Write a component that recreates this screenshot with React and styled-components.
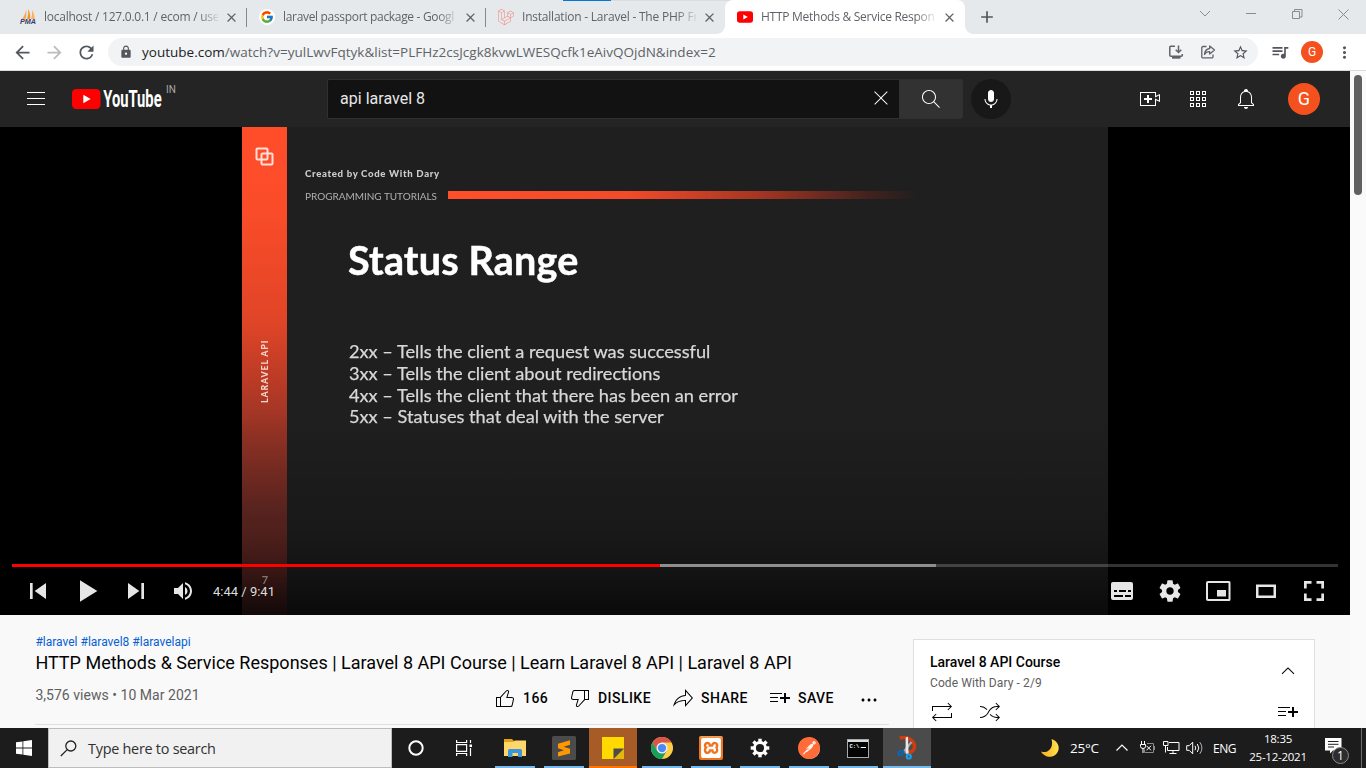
import React from "react";
import styled, { createGlobalStyle, css } from "styled-components";
import { MdArrowBack, MdArrowForward, MdRefresh, MdLock, MdQueueMusic, MdMoreVert, MdStarBorder, MdClose, MdAdd } from "react-icons/md";
import { FcGoogle } from "react-icons/fc";
import { SiLaravel, SiXampp, SiPostman } from "react-icons/si";

const GlobalStyle = createGlobalStyle`
  * { box-sizing: border-box; }
  body { margin: 0; overflow: hidden; background: #f9f9f9; font-family: Roboto, "Liberation Sans", sans-serif; }
  svg { display: block; flex: none; }
`;

const segoe = `"Open Sans", "Noto Sans", sans-serif`;

const Screen = styled.div`
  width: 1366px;
  height: 768px;
  display: flex;
  flex-direction: column;
  overflow: hidden;
`;

/* ---------- browser chrome ---------- */

const TabStrip = styled.div`
  position: relative;
  height: 34px;
  flex: none;
  display: flex;
  background: #e6e9ec;
  padding-left: 8px;
`;

const LoadingMark = styled.div`
  position: absolute;
  top: 0;
  left: 563px;
  width: 241px;
  height: 1px;
  background: linear-gradient(90deg, #0078d7 48px, #dcdcdc 48px);
`;

const Tab = styled.div`
  position: relative;
  width: 239px;
  height: 34px;
  display: flex;
  align-items: center;
  padding: 0 8px 0 12px;
  ${(p) => p.$separator && css`
    &::after {
      content: "";
      position: absolute;
      right: 0;
      top: 8px;
      width: 1px;
      height: 19px;
      background: #85888c;
    }
  `}
  ${(p) => p.$active && css`
    width: 240px;
    background: #fff;
    border-radius: 8px 8px 0 0;
    &::before, &::after {
      content: "";
      position: absolute;
      bottom: 0;
      width: 8px;
      height: 8px;
    }
    &::before { left: -8px; background: radial-gradient(circle at 0 0, transparent 7.5px, #fff 8px); }
    &::after { right: -8px; background: radial-gradient(circle at 100% 0, transparent 7.5px, #fff 8px); }
  `}
`;

const Favicon = styled.div`
  width: 16px;
  height: 34px;
  display: flex;
  align-items: center;
  justify-content: center;
  margin-right: 8px;
`;

const GoogleDisc = styled.div`
  width: 16px;
  height: 16px;
  flex: none;
  border-radius: 50%;
  background: #fff;
  display: flex;
  align-items: center;
  justify-content: center;
`;

const TabTitle = styled.div`
  width: 175px;
  overflow: hidden;
  white-space: nowrap;
  font: 12px/18px ${segoe};
  letter-spacing: ${(p) => p.$spacing}px;
  color: #5f6368;
  mask-image: linear-gradient(90deg, #000 154px, transparent 177px);
`;

const TabClose = styled.div`
  margin-left: 5px;
  width: 16px;
  display: flex;
  justify-content: center;
  color: #5f6368;
`;

const NewTab = styled.div`
  width: 44px;
  display: flex;
  align-items: center;
  justify-content: center;
  color: #53575c;
`;

const WindowButtons = styled.div`
  margin-left: auto;
  display: flex;
  height: 28px;
  align-items: center;
  color: #888b8f;
  & > div { width: 46px; display: flex; justify-content: center; }
`;

const Toolbar = styled.div`
  height: 37px;
  flex: none;
  display: flex;
  align-items: center;
  background: #fff;
  border-bottom: 1px solid #d9dde0;
  padding: 0 6px;
  color: #53575c;
`;

const ToolButton = styled.div`
  width: 32px;
  height: 32px;
  display: flex;
  align-items: center;
  justify-content: center;
  color: ${(p) => (p.$dim ? "#babcbe" : "#53575c")};
`;

const AddressBar = styled.div`
  width: 1150px;
  height: 28px;
  margin: 0 6px;
  border-radius: 14px;
  background: #f1f3f4;
  display: flex;
  align-items: center;
  padding: 0 2px 0 11px;
`;

const Url = styled.div`
  flex: 1;
  margin-left: 9px;
  font: 13.5px/20px ${segoe};
  letter-spacing: 0.01px;
  white-space: nowrap;
  color: #5f6368;
  b { font-weight: 400; color: #202124; }
`;

const Avatar = styled.div`
  width: ${(p) => p.$size}px;
  height: ${(p) => p.$size}px;
  border-radius: 50%;
  background: #f4511e;
  color: #fff;
  display: flex;
  align-items: center;
  justify-content: center;
  font-size: ${(p) => p.$font}px;
  line-height: 1;
`;

/* ---------- page ---------- */

const Viewport = styled.div`
  height: 657px;
  flex: none;
  display: flex;
`;

const Page = styled.div`
  width: 1350px;
  display: flex;
  flex-direction: column;
  overflow: hidden;
`;

const Scrollbar = styled.div`
  width: 16px;
  background: #fafafa;
  padding: 4px;
  &::before {
    content: "";
    display: block;
    height: 120px;
    border-radius: 4px;
    background: #606060;
  }
`;

const Masthead = styled.div`
  height: 56px;
  flex: none;
  background: #242424;
  display: flex;
  align-items: center;
  padding: 0 30px 0 24px;
`;

const Brand = styled.div`
  display: flex;
  margin-left: 24px;
  width: 255px;
`;

const Country = styled.span`
  margin: -5px 0 0 4px;
  font-size: 10px;
  color: #aaa;
  line-height: 12px;
`;

const SearchField = styled.div`
  width: 572px;
  height: 40px;
  border: 1px solid #303030;
  border-right: 0;
  border-radius: 2px 0 0 2px;
  background: #121212;
  display: flex;
  align-items: center;
  justify-content: space-between;
  padding: 0 7px 2px 12px;
  color: #e8e8e8;
  font-size: 16px;
  letter-spacing: 0.02px;
`;

const SearchButton = styled.div`
  width: 64px;
  height: 40px;
  background: #323232;
  border: 1px solid #303030;
  border-radius: 0 2px 2px 0;
  display: flex;
  align-items: center;
  justify-content: center;
`;

const MicButton = styled.div`
  width: 40px;
  height: 40px;
  border-radius: 50%;
  background: #181818;
  margin-left: 8px;
  display: flex;
  align-items: center;
  justify-content: center;
`;

const MastheadEnd = styled.div`
  margin-left: auto;
  display: flex;
  align-items: center;
  gap: 24px;
  & > :last-child { margin-left: 6px; }
`;

const Player = styled.div`
  position: relative;
  height: 488px;
  flex: none;
  background: #000;
  display: flex;
  justify-content: center;
`;

const Slide = styled.div`
  width: 866px;
  height: 488px;
  background: #1f1f1f;
  display: flex;
`;

const SlideRail = styled.div`
  width: 45px;
  background: linear-gradient(180deg, #ff4d2a 0, #fb4c29 80px, #e04527 195px, #c03c26 245px, #963325 305px, #692a24 385px, #5d2521 440px, #3a1e1c 488px);
  display: flex;
  flex-direction: column;
  align-items: center;
  padding: 20px 0 0 1px;
  color: #fff;
`;

const RailLabel = styled.div`
  writing-mode: vertical-rl;
  transform: rotate(180deg);
  height: 66px;
  margin-top: 170px;
  font: 900 8.8px/12px Lato, sans-serif;
  letter-spacing: 0.85px;
  white-space: nowrap;
  color: #f8d5cc;
  filter: blur(0.4px);
`;

const RailNumber = styled.div`
  margin-top: 170px;
  font: 700 11px/14px Lato, sans-serif;
  color: #d9cac7;
  filter: blur(0.5px);
`;

const SlideBody = styled.div`
  padding: 40px 0 0 18px;
  filter: blur(0.55px);
  white-space: nowrap;
`;

const Author = styled.div`
  font: 900 9.6px/14px Lato, sans-serif;
  letter-spacing: 0.67px;
  color: #cdcdcd;
`;

const SeriesRow = styled.div`
  display: flex;
  align-items: center;
  height: 14px;
  margin-top: 8px;
`;

const Series = styled.div`
  width: 143px;
  font: 10px/14px Lato, sans-serif;
  letter-spacing: -0.02px;
  color: #b0b0b0;
`;

const SeriesLine = styled.div`
  width: 472px;
  height: 8px;
  margin-top: -3px;
  background: linear-gradient(90deg, #ff4f2b 0, #f24b2a 180px, rgba(190, 58, 36, 0.85) 310px, rgba(120, 40, 30, 0.4) 420px, rgba(60, 30, 28, 0) 472px);
`;

const SlideTitle = styled.div`
  margin: 33px 0 0 43px;
  font: 700 39.5px/48px Lato, sans-serif;
  letter-spacing: 0.2px;
  -webkit-text-stroke: 0.5px #fff;
  color: #fff;
`;

const SlideList = styled.div`
  margin: 57px 0 0 44px;
  font: 18.2px/21.8px Lato, sans-serif;
  font-variant-ligatures: none;
  -webkit-text-stroke: 0.25px #d6d6d6;
  color: #d9d9d9;
`;

const Controls = styled.div`
  position: absolute;
  inset: auto 0 0 0;
  height: 200px;
  padding: 0 12px;
  display: flex;
  flex-direction: column;
  justify-content: flex-end;
  background: linear-gradient(180deg, transparent 0, rgba(0, 0, 0, 0.22) 120px, rgba(0, 0, 0, 0.4) 160px, rgba(0, 0, 0, 0.68) 200px);
`;

const Progress = styled.div`
  height: 3px;
  background: linear-gradient(90deg, #f00 648px, rgba(255, 255, 255, 0.52) 648px, rgba(255, 255, 255, 0.52) 924px, rgba(255, 255, 255, 0.2) 924px);
`;

const ControlRow = styled.div`
  height: 48px;
  display: flex;
  align-items: center;
  padding-left: 2px;
  color: #e6e6e6;
`;

const PlaybackButtons = styled.div`
  display: flex;
  align-items: center;
  & > :first-child { margin-right: 2px; }
  & > :last-child { margin-left: 6px; }
`;

const Time = styled.div`
  flex: 1;
  margin-left: 11px;
  font-size: 13px;
  letter-spacing: 0;
  color: #ddd;
`;

const Below = styled.div`
  flex: 1;
  display: flex;
  justify-content: space-between;
  padding: 0 35px 0 35px;
  background: #f9f9f9;
`;

const VideoInfo = styled.div`
  width: 854px;
  height: 110px;
  padding: 19px 0 0 0.4px;
  border-bottom: 1px solid #e0e0e0;
  white-space: nowrap;
`;

const Tags = styled.div`
  font-size: 12px;
  line-height: 16px;
  color: #065fd4;
`;

const VideoTitle = styled.div`
  font-size: 18px;
  line-height: 26px;
  color: #030303;
`;

const MetaRow = styled.div`
  margin-top: 2px;
  height: 40px;
  display: flex;
  align-items: center;
`;

const Views = styled.div`
  width: 457.600px;
  margin-top: -6px;
  font-size: 14px;
  letter-spacing: 0.03px;
  color: #606060;
`;

const Action = styled.div`
  display: flex;
  align-items: center;
  gap: 6px;
  margin-right: ${(p) => p.$after}px;
  font-size: 14px;
  font-weight: 500;
  letter-spacing: 0.45px;
  color: #030303;
  span { width: ${(p) => p.$label}px; }
`;

const MoreButton = styled.div`
  padding-top: 3px;
`;

const Playlist = styled.div`
  width: 402px;
  margin-top: 24px;
  padding: 14px 14px 0 16px;
  background: #fff;
  border: 1px solid #dfdfdf;
  border-bottom: 0;
`;

const PlaylistHead = styled.div`
  display: flex;
  align-items: flex-start;
  justify-content: space-between;
  height: 41px;
  & > svg { margin-top: 5px; }
`;

const PlaylistTitle = styled.div`
  font-size: 14px;
  line-height: 20px;
  font-weight: 500;
  margin-top: -2px;
  color: #030303;
`;

const PlaylistOwner = styled.div`
  font-size: 12px;
  line-height: 16px;
  margin-top: 3px;
  letter-spacing: 0.1px;
  color: #606060;
`;

const PlaylistTools = styled.div`
  display: flex;
  gap: 24px;
  margin-top: 5px;
  & > :last-child { margin-left: auto; }
`;

/* ---------- taskbar ---------- */

const Taskbar = styled.div`
  height: 40px;
  flex: none;
  display: flex;
  background: #1c1c1c;
  color: #fff;
  font-family: ${segoe};
`;

const TaskButton = styled.div`
  width: 48px;
  display: flex;
  align-items: center;
  justify-content: center;
`;

const TaskSearch = styled.div`
  width: 344px;
  display: flex;
  align-items: center;
  gap: 11px;
  padding-left: 11px;
  background: #f1f1f1;
  border: 1px solid #bcbcbc;
  font-size: 14.4px;
  letter-spacing: -0.25px;
  color: #303030;
`;

const AppList = styled.div`
  display: flex;
  gap: 1px;
  margin-left: 3px;
`;

const AppItem = styled.div`
  width: 48px;
  height: 40px;
  display: flex;
  align-items: center;
  justify-content: center;
  background: ${(p) => p.$fill || "transparent"};
  background-image: linear-gradient(${(p) => p.$line || "#76b9ed"}, ${(p) => p.$line || "#76b9ed"});
  background-repeat: no-repeat;
  background-position: center bottom;
  background-size: ${(p) => (p.$fill ? 48 : 40)}px 2px;
`;

const XamppTile = styled.div`
  width: 24px;
  height: 24px;
  border-radius: 2px;
  background: linear-gradient(#f7a25a 0, #f0741f 4px);
  display: flex;
  align-items: center;
  justify-content: center;
`;

const PostmanDisc = styled.div`
  width: 21px;
  height: 21px;
  border-radius: 50%;
  background: #fff;
  display: flex;
  align-items: center;
  justify-content: center;
  color: #ff6c37;
`;

const Tray = styled.div`
  margin-left: auto;
  display: flex;
  align-items: center;
  font-size: 12px;
  white-space: nowrap;
`;

const Temperature = styled.span`
  width: 46px;
  margin-left: 10px;
  font-size: 13.5px;
  letter-spacing: -0.25px;
`;

const TrayIcon = styled.div`
  width: 24px;
  display: flex;
  justify-content: center;
  margin-left: ${(p) => p.$before || 0}px;
`;

const Language = styled.span`
  width: 36px;
  margin-left: 6px;
  letter-spacing: -0.5px;
`;

const Clock = styled.div`
  width: 58px;
  text-align: center;
  line-height: 18px;
  font-size: 11.5px;
  letter-spacing: -0.25px;
`;

const Notifications = styled.div`
  position: relative;
  width: 54px;
  padding-left: 18px;
`;

const Badge = styled.div`
  position: absolute;
  left: 25px;
  top: 5px;
  width: 17px;
  height: 17px;
  border-radius: 50%;
  border: 1px solid #8b8b8b;
  background: #2d2d2d;
  font-size: 12px;
  line-height: 15px;
  text-align: center;
`;

const DesktopEdge = styled.div`
  width: 5px;
  height: 40px;
  border-left: 1px solid #6a6a6a;
`;

/* ---------- icons ---------- */

const Icon = ({ d, size = 24, box = 24, color = "#fff" }) => (
  <svg width={size} height={size} viewBox={`0 0 ${box} ${box}`} fill={color}>
    <path fillRule="evenodd" d={d} />
  </svg>
);

const paths = {
  menu: "M21,6H3V5h18V6z M21,11H3v1h18V11z M21,17H3v1h18V17z",
  clear: "M12.7,12l6.6,6.6l-0.7,0.7L12,12.7l-6.6,6.6l-0.7-0.7l6.6-6.6L4.6,5.4l0.7-0.7l6.6,6.6l6.6-6.6l0.7,0.7L12.7,12z",
  search: "M20.87,20.17l-5.59-5.59C16.35,13.35,17,11.75,17,10c0-3.87-3.13-7-7-7s-7,3.13-7,7s3.13,7,7,7c1.75,0,3.35-0.65,4.58-1.71l5.59,5.59L20.87,20.17z M10,16c-3.31,0-6-2.69-6-6s2.69-6,6-6s6,2.69,6,6S13.31,16,10,16z",
  mic: "M12 3C10.34 3 9 4.37 9 6.07V11.93C9 13.63 10.34 15 12 15C13.66 15 15 13.63 15 11.93V6.07C15 4.37 13.66 3 12 3ZM18.5 12H17.5C17.5 15.03 15.03 17.5 12 17.5C8.97 17.5 6.5 15.03 6.5 12H5.5C5.5 15.24 7.89 17.93 11 18.41V21H13V18.41C16.11 17.93 18.5 15.24 18.5 12Z",
  create: "M14,13h-3v3H9v-3H6v-2h3V8h2v3h3V13z M17,6H3v12h14v-6.39l4,1.83V8.56l-4,1.83V6 M18,5v3.83L22,7v8l-4-1.83V19H2V5H18L18,5z",
  bell: "M10,20h4c0,1.1-0.9,2-2,2S10,21.1,10,20z M20,17.35V19H4v-1.65l2-1.88v-5.15C6,7.4,7.56,5.1,10,4.34v-0.38c0-1.42,1.49-2.5,2.99-1.76C13.65,2.52,14,3.23,14,3.96l0,0.39c2.44,0.75,4,3.06,4,5.98v5.15L20,17.35z M19,17.77l-2-1.88v-5.47c0-2.47-1.19-4.36-3.13-5.1c-1.26-0.53-2.64-0.5-3.84,0.03C8.15,6.11,7,7.99,7,10.42v5.47l-2,1.88V18h14V17.77z",
  like: "M18.77,11h-4.23l1.52-4.94C16.38,5.03,15.54,4,14.38,4c-0.58,0-1.14,0.24-1.52,0.65L7,11H3v10h4h1h9.43c1.06,0,1.98-0.67,2.19-1.61l1.34-6C21.23,12.15,20.18,11,18.77,11z M7,20H4v-8h3V20z M19.98,13.17l-1.34,6C18.54,19.65,18.03,20,17.43,20H8v-8.61l5.6-6.06C13.79,5.12,14.08,5,14.38,5c0.26,0,0.5,0.11,0.63,0.3c0.07,0.1,0.15,0.26,0.09,0.47l-1.52,4.94L13.18,12h1.35h4.23c0.41,0,0.8,0.17,1.03,0.46C19.92,12.61,20.05,12.86,19.98,13.17z",
  dislike: "M17,4h-1H6.57C5.5,4,4.59,4.67,4.38,5.61l-1.34,6C2.77,12.85,3.82,14,5.23,14h4.23l-1.52,4.94C7.62,19.97,8.46,21,9.62,21c0.58,0,1.14-0.24,1.52-0.65L17,14h4V4H17z M10.4,19.67C10.21,19.88,9.92,20,9.62,20c-0.26,0-0.5-0.11-0.63-0.3c-0.07-0.1-0.15-0.26-0.09-0.47l1.52-4.94l0.4-1.29H9.46H5.23c-0.41,0-0.8-0.17-1.03-0.46c-0.12-0.15-0.25-0.4-0.18-0.72l1.34-6C5.46,5.35,5.97,5,6.57,5H16v8.61L10.4,19.67z M20,13h-3V5h3V13z",
  share: "M15,5.63L20.66,12L15,18.37V15v-1h-1c-3.96,0-7.14,1-9.75,3.09c1.84-4.07,5.11-6.4,9.89-7.1L15,9.86V9V5.63 M14,3v6C6.22,10.13,3.11,15.33,2,21c2.78-3.97,6.44-6,12-6v6l8-9L14,3L14,3z",
  save: "M22,13h-4v4h-2v-4h-4v-2h4V7h2v4h4V13z M14,7H2v1h12V7z M2,12h8v-1H2V12z M2,16h8v-1H2V16z",
  more: "M7.5,12c0,0.83-0.67,1.5-1.5,1.5S4.5,12.83,4.5,12s0.67-1.5,1.5-1.5S7.5,11.17,7.5,12z M12,10.5c-0.83,0-1.5,0.67-1.5,1.5s0.67,1.5,1.5,1.5s1.5-0.67,1.5-1.5S12.83,10.5,12,10.5z M18,10.5c-0.83,0-1.5,0.67-1.5,1.5s0.67,1.5,1.5,1.5s1.5-0.67,1.5-1.5S18.83,10.5,18,10.5z",
  repeat: "M21,13h1v5L3.93,18.03l2.62,2.62l-0.71,0.71L1.99,17.5l3.85-3.85l0.71,0.71l-2.67,2.67L21,17V13z M3,7l17.12-0.03l-2.67,2.67l0.71,0.71l3.85-3.85l-3.85-3.85l-0.71,0.71l2.62,2.62L2,6v5h1V7z",
  shuffle: "M18.15,13.65L22,17.5l-3.85,3.85l-0.71-0.71L20.09,18H19c-2.84,0-5.53-1.23-7.39-3.38l0.76-0.65C14.03,15.89,16.45,17,19,17h1.09l-2.65-2.65L18.15,13.65z M19,7h1.09l-2.65,2.65l0.71,0.71l3.85-3.85l-3.85-3.85l-0.71,0.71L20.09,6H19c-3.58,0-6.86,1.95-8.57,5.09l-0.73,1.34C8.16,15.25,5.21,17,2,17v1c3.58,0,6.86-1.95,8.57-5.09l0.73-1.34C12.84,8.75,15.79,7,19,7z M8.59,9.98l0.75-0.66C7.49,7.21,4.81,6,2,6v1C4.52,7,6.92,8.09,8.59,9.98z",
  collapse: "M18.4,14.6 12,8.3 5.6,14.6 6.3,15.3 12,9.7 17.7,15.3z",
  prev: "M12,12h2v12h-2z M15.5,18l8.5,6V12z",
  play: "M12,26L25,18L12,10z",
  next: "M12,24L20.5,18L12,12V24z M22,12v12h2V12h-2z",
  volume: "M8,21L12,21L17,26L17,10L12,15L8,15L8,21Z M19,14L19,22C20.48,21.32 21.5,19.77 21.5,18C21.5,16.26 20.48,14.74 19,14Z M19,11.29C21.89,12.15 24,14.83 24,18C24,21.17 21.89,23.85 19,24.71L19,26.77C23.01,25.86 26,22.28 26,18C26,13.72 23.01,10.14 19,9.23L19,11.29Z",
  gear: "m 23.94,18.78 c .03,-0.25 .05,-0.51 .05,-0.78 0,-0.27 -0.02,-0.52 -0.05,-0.78 l 1.68,-1.32 c .15,-0.12 .19,-0.33 .09,-0.51 l -1.6,-2.76 c -0.09,-0.17 -0.31,-0.24 -0.48,-0.17 l -1.99,.8 c -0.41,-0.32 -0.86,-0.58 -1.35,-0.78 l -0.30,-2.12 c -0.02,-0.19 -0.19,-0.33 -0.39,-0.33 l -3.2,0 c -0.2,0 -0.36,.14 -0.39,.33 l -0.30,2.12 c -0.48,.2 -0.93,.47 -1.35,.78 l -1.99,-0.8 c -0.18,-0.07 -0.39,0 -0.48,.17 l -1.6,2.76 c -0.10,.17 -0.05,.39 .09,.51 l 1.68,1.32 c -0.03,.25 -0.05,.52 -0.05,.78 0,.26 .02,.52 .05,.78 l -1.68,1.32 c -0.15,.12 -0.19,.33 -0.09,.51 l 1.6,2.76 c .09,.17 .31,.24 .48,.17 l 1.99,-0.8 c .41,.32 .86,.58 1.35,.78 l .30,2.12 c .02,.19 .19,.33 .39,.33 l 3.2,0 c .2,0 .36,-0.14 .39,-0.33 l .30,-2.12 c .48,-0.2 .93,-0.47 1.35,-0.78 l 1.99,.8 c .18,.07 .39,0 .48,-0.17 l 1.6,-2.76 c .09,-0.17 .05,-0.39 -0.09,-0.51 l -1.68,-1.32 0,0 z m -5.94,2.01 c -1.54,0 -2.8,-1.25 -2.8,-2.8 0,-1.54 1.25,-2.8 2.8,-2.8 1.54,0 2.8,1.25 2.8,2.8 0,1.54 -1.25,2.8 -2.8,2.8 l 0,0 z",
  captions: "M15,15h18a2,2 0 0 1 2,2v14a2,2 0 0 1-2,2H15a2,2 0 0 1-2-2V17a2,2 0 0 1 2-2z M16,23v2h3v-2z M21,23v2h7v-2z M30,23v2h3v-2z M16,28v2h9v-2z M27,28v2h6v-2z",
  miniplayer: "M14,14h21a1.5,1.5 0 0 1 1.5,1.5v17a1.5,1.5 0 0 1-1.5,1.5H14a2,2 0 0 1-2-2V16a2,2 0 0 1 2-2z M14,16v16h20.5V16z M23,23h9v6.5h-9z",
  theater: "M14,17.5h20v13.5H14z M16.5,20v8.5h15V20z",
  fullscreen: "M14,14h7.5v2.7h-4.8v4.8H14z M26.5,14H34v7.5h-2.7v-4.8h-4.8z M14,26.5h2.7v4.8h4.8V34H14z M31.3,26.5H34V34h-7.5v-2.7h4.8z",
};

const AppsIcon = () => (
  <svg width="24" height="24" fill="none" stroke="#fff">
    {[4.5, 10.5, 16.5].map((y) => [4.5, 10.5, 16.5].map((x) => <rect key={`${x}-${y}`} x={x} y={y} width="3" height="3" />))}
  </svg>
);

const YouTubeLogo = () => (
  <svg width="90" height="20" viewBox="0 0 90 20">
    <rect width="28.5" height="20" rx="4.2" fill="#f00" />
    <path d="M11.3 5.7v8.6l7.4-4.3z" fill="#fff" />
    <text x="31.300" y="18.200" textLength="58.300" lengthAdjust="spacingAndGlyphs" fontFamily="Roboto, sans-serif" fontWeight="700" fontSize="23.500" fill="#fff">YouTube</text>
  </svg>
);

const YouTubeFavicon = () => (
  <svg width="16" height="16">
    <rect y="2.300" width="16" height="11.500" rx="2.800" fill="#f00" />
    <path d="M6.300 5.600v5L10.800 8z" fill="#fff" />
  </svg>
);

const SailsFavicon = () => (
  <svg width="18" height="18" viewBox="0 0 18 18">
    <path d="M7 1Q7 6 3 11l4-.5Q8 5 7 1z" fill="#f4a64b" />
    <path d="M9 1q3 5 2 10H8Q10 6 9 1z" fill="#f79420" />
    <path d="M13 2q3 5 2.500 9H12q1.500-4 1-9z" fill="#fbb25c" />
    <text x="1" y="16.300" textLength="16" lengthAdjust="spacingAndGlyphs" fontFamily="Liberation Sans, sans-serif" fontWeight="700" fontStyle="italic" fontSize="6.500" fill="#3a3a6e">PMA</text>
  </svg>
);

const InstallIcon = () => (
  <svg width="16" height="16" fill="none" stroke="#5f6368" strokeWidth="1.500">
    <path d="M7 2.300H2.800a1 1 0 0 0-1 1v8a1 1 0 0 0 1 1h10.500a1 1 0 0 0 1-1V10" />
    <path d="M10.500 1.500v6.500M7.700 5.800l2.800 2.700 2.800-2.700" />
    <path d="M4 13.700h8.500" strokeWidth="2" />
  </svg>
);

const ShareIcon = () => (
  <svg width="16" height="16" fill="none" stroke="#5f6368" strokeWidth="1.300">
    <path d="M6.500 2.500H3a1.200 1.200 0 0 0-1.200 1.200v9A1.200 1.200 0 0 0 3 13.900h8.800a1.200 1.200 0 0 0 1.200-1.200V10.500" />
    <path d="M9.700 2l4.800 4-4.800 4V7.700C7.300 7.700 5.600 8.500 4.500 10.500c.2-3 1.900-5.500 5.200-6z" strokeLinejoin="round" />
  </svg>
);

const SoftSvg = styled.svg`
  filter: blur(0.5px);
`;

const OverlapIcon = () => (
  <SoftSvg width="20" height="20" fill="none" stroke="#ffe0d8" strokeWidth="2">
    <rect x="1.500" y="1.500" width="11" height="11" rx="1" />
    <rect x="6.500" y="6.500" width="11" height="11" rx="1" />
  </SoftSvg>
);

const WindowsLogo = () => (
  <svg width="16" height="16" fill="#fff">
    <path d="M0 2.300l6.500-.9v6.100H0zM7.300 1.300L16 0v7.500H7.300zM0 8.400h6.500v6.200L0 13.700zM7.300 8.400H16V16l-8.700-1.200z" />
  </svg>
);

const Magnifier = () => (
  <svg width="17" height="17" fill="none" stroke="#222" strokeWidth="1.300">
    <circle cx="10.800" cy="6" r="5" />
    <path d="M7.200 9.600L.8 16" />
  </svg>
);

const TaskView = () => (
  <svg width="18" height="16" fill="none" stroke="#fff" strokeWidth="1.200">
    <path d="M1.600 0v2.500h10V0M1.600 16v-2.500h10V16M1.600 4.700h10v6.600h-10zM15.500 0v3M15.500 8v8" />
    <rect x="14.500" y="4.500" width="2.500" height="2.500" fill="#fff" stroke="none" />
  </svg>
);

const FolderIcon = () => (
  <svg width="22" height="20">
    <path d="M0 1h8l2 2h11v4H0z" fill="#e3a30d" />
    <path d="M0 4h9l2-1.500h11V18H0z" fill="#ffd669" />
    <path d="M4 19v-6.500a1.500 1.500 0 0 1 1.500-1.500h11a1.500 1.500 0 0 1 1.500 1.500V19h-4v-4H8.500v4z" fill="#3b97dd" />
  </svg>
);

const SublimeIcon = () => (
  <svg width="24" height="24">
    <rect width="24" height="24" rx="1.500" fill="#4b4b4b" />
    <path d="M18 4.200v4.500L11.500 10.800l6.500 2v4.700L6 20.500v-4.200l6-2-6-2V7.800z" fill="#ff9800" />
  </svg>
);

const StickyIcon = () => (
  <svg width="22" height="22">
    <path d="M0 0h22v12L12 22H0z" fill="#ffd900" />
    <path d="M22 11.500V22H11.500z" fill="#e3b70b" />
    <path d="M11.500 11.500H22L11.500 22z" fill="#494b4d" />
  </svg>
);

const ChromeIcon = () => (
  <svg width="22" height="22" viewBox="0 0 48 48">
    <circle cx="24" cy="24" r="24" fill="#ffce44" />
    <path d="M3.200 12A24 24 0 0 1 44.800 12H24L13.600 30z" fill="#de5347" />
    <path d="M3.200 12A24 24 0 0 0 24 48l10.400-18H13.600z" fill="#18a05d" />
    <circle cx="24" cy="24" r="12" fill="#f1f1f1" />
    <circle cx="24" cy="24" r="9" fill="#4a8af4" />
  </svg>
);

const SettingsGear = () => (
  <svg width="20" height="20" viewBox="-10 -10 20 20">
    {[0, 45, 90, 135, 180, 225, 270, 315].map((a) => <rect key={a} x="-1.700" y="-9.300" width="3.400" height="4.500" fill="#fff" transform={`rotate(${a})`} />)}
    <circle r="5.500" fill="none" stroke="#fff" strokeWidth="2.800" />
  </svg>
);

const ConsoleIcon = () => (
  <svg width="22" height="19">
    <rect width="22" height="19" fill="#a7abb0" />
    <rect x="1" y="1" width="20" height="2" fill="#d9dcdf" />
    <rect x="1" y="3" width="20" height="15" fill="#050505" />
    <text x="2.500" y="9" fontFamily="Liberation Mono, monospace" fontSize="5.500" fontWeight="700" fill="#fff">C:\.</text>
    <path d="M14 8.500h5" stroke="#fff" />
  </svg>
);

const SnipIcon = () => (
  <svg width="20" height="24" viewBox="0 0 20 24">
    <path d="M3 2.300C8-.3 17.500 3.500 17.500 10.500c0 4-3.500 6-6.500 5.500" fill="none" stroke="#cf3c10" strokeWidth="3.600" />
    <path d="M15.500 6.500l-8.500 11-1.500-2 8-10z" fill="#a9a9a9" />
    <path d="M8.600 1.500l2.400-.7.600 17h-3z" fill="#e8e8e8" />
    <path d="M7.500 15.500L5 16" stroke="#0f63b5" strokeWidth="2.500" />
    <circle cx="3.300" cy="17" r="2" fill="none" stroke="#0f63b5" strokeWidth="2.200" />
    <circle cx="11.800" cy="20.500" r="2" fill="none" stroke="#19a0ea" strokeWidth="2.200" />
  </svg>
);

const Moon = () => (
  <svg width="20" height="20">
    <defs><linearGradient id="moon" x1="0" x2="1"><stop offset="0" stopColor="#ffa81f" /><stop offset="1" stopColor="#ffe34d" /></linearGradient></defs>
    <path d="M11.500 1C20 4 21 13 14.500 17.500 9.500 20.500 3.500 18 1 13.500c7 2.500 13-3.500 10.500-12.500z" fill="url(#moon)" />
  </svg>
);

const PowerIcon = () => (
  <svg width="17" height="14" fill="none" stroke="#fff">
    <path d="M2.500 0v3M5.500 0v3M1.500 3.500h5v2q0 2-2.500 2t-2.500-2zM4 7.500v4.500" />
    <path d="M8 2.500h6.500v9H5.500v-3M15.500 5v4" stroke="#8b8b8b" />
    <path d="M7.500 4.800l4.500 4.500M12 4.800L7.500 9.300" />
  </svg>
);

const NetworkIcon = () => (
  <svg width="17" height="14" fill="none" stroke="#fff">
    <path d="M6 1.500h10v8H4.500V6M10 9.500v3M6.500 12.500h7M.5.500h4.500v4H.5zM2.500 4.500v7" />
  </svg>
);

const SpeakerIcon = () => (
  <svg width="18" height="14" fill="none" stroke="#fff">
    <path d="M.7 4.700h2.500l3.500-3.500v11.600L3.200 9.300H.7z" />
    <path d="M9 4.800q1.500 2.200 0 4.400M11.300 3q3 4 0 8" />
    <path d="M13.800 1.200q4.300 5.800 0 11.600" stroke="#b0b0b0" />
  </svg>
);

const MessageSvg = styled.svg`
  margin-top: -4px;
`;

const MessageIcon = () => (
  <MessageSvg width="17" height="16">
    <path d="M0 0h16.500v12.500H8l-3 3v-3H0z" fill="#fff" />
    <path d="M3 3.500h10.500M3 6.300h10.500M3 9h6" stroke="#222" />
  </MessageSvg>
);

/* ---------- content ---------- */

const tabs = [
  { title: "localhost / 127.0.0.1 / ecom / use", icon: <SailsFavicon />, spacing: -0.24, separator: true },
  { title: "laravel passport package - Googl", icon: <GoogleDisc><FcGoogle size={14} /></GoogleDisc>, spacing: -0.32, separator: true },
  { title: "Installation - Laravel - The PHP Fr", icon: <SiLaravel size={16} color="#f2817b" />, spacing: -0.22 },
  { title: "HTTP Methods & Service Respon", icon: <YouTubeFavicon />, spacing: -0.27, active: true },
];

const statuses = [
  "2xx – Tells the client a request was successful",
  "3xx – Tells the client about redirections",
  "4xx – Tells the client that there has been an error",
  "5xx – Statuses that deal with the server",
];

const actions = [
  { icon: "like", text: "166", label: 25, after: 20 },
  { icon: "dislike", text: "DISLIKE", label: 54, after: 19 },
  { icon: "share", text: "SHARE", label: 47, after: 20 },
  { icon: "save", text: "SAVE", label: 37, after: 22 },
];

const apps = [
  { name: "files", icon: <FolderIcon /> },
  { name: "editor", icon: <SublimeIcon /> },
  { name: "notes", icon: <StickyIcon />, fill: "#a75c27", line: "#ff7300" },
  { name: "chrome", icon: <ChromeIcon /> },
  { name: "xampp", icon: <XamppTile><SiXampp size={20} color="#fff" /></XamppTile> },
  { name: "settings", icon: <SettingsGear /> },
  { name: "postman", icon: <PostmanDisc><SiPostman size={22} /></PostmanDisc> },
  { name: "console", icon: <ConsoleIcon /> },
  { name: "snip", icon: <SnipIcon />, fill: "#4b4b4b" },
];

export default function App() {
  return (
    <Screen>
      <GlobalStyle />
      <TabStrip>
        <LoadingMark />
        {tabs.map((t) => (
          <Tab key={t.title} $active={t.active} $separator={t.separator}>
            <Favicon>{t.icon}</Favicon>
            <TabTitle $spacing={t.spacing}>{t.title}</TabTitle>
            <TabClose><MdClose size={15} /></TabClose>
          </Tab>
        ))}
        <NewTab><MdAdd size={20} /></NewTab>
        <WindowButtons>
          <div><svg width="12" height="8" fill="none" stroke="currentColor"><path d="M1 1l5 5 5-5" /></svg></div>
          <div><svg width="10" height="2"><path d="M0 .5h10" stroke="currentColor" /></svg></div>
          <div><svg width="11" height="11" fill="none" stroke="currentColor"><path d="M.5 2.500h7v7h-7zM2.500 2.500v-2h7.500v7.500H7.500" /></svg></div>
          <div><svg width="11" height="11" stroke="currentColor"><path d="M.5.5l10 10M10.500.5l-10 10" /></svg></div>
        </WindowButtons>
      </TabStrip>
      <Toolbar>
        <ToolButton><MdArrowBack size={21} /></ToolButton>
        <ToolButton $dim><MdArrowForward size={21} /></ToolButton>
        <ToolButton><MdRefresh size={21} /></ToolButton>
        <AddressBar>
          <MdLock size={14} />
          <Url><b>youtube.com</b>/watch?v=yulLwvFqtyk&amp;list=PLFHz2csJcgk8kvwLWESQcfk1eAivQOjdN&amp;index=2</Url>
          <ToolButton><InstallIcon /></ToolButton>
          <ToolButton><ShareIcon /></ToolButton>
          <ToolButton><MdStarBorder size={17} /></ToolButton>
        </AddressBar>
        <ToolButton><MdQueueMusic size={20} /></ToolButton>
        <ToolButton><Avatar $size={22} $font={12}>G</Avatar></ToolButton>
        <ToolButton><MdMoreVert size={19} /></ToolButton>
      </Toolbar>

      <Viewport>
        <Page>
          <Masthead>
            <Icon d={paths.menu} />
            <Brand><YouTubeLogo /><Country>IN</Country></Brand>
            <SearchField>api laravel 8<Icon d={paths.clear} size={22} /></SearchField>
            <SearchButton><Icon d={paths.search} /></SearchButton>
            <MicButton><Icon d={paths.mic} /></MicButton>
            <MastheadEnd>
              <Icon d={paths.create} />
              <AppsIcon />
              <Icon d={paths.bell} />
              <Avatar $size={32} $font={18}>G</Avatar>
            </MastheadEnd>
          </Masthead>

          <Player>
            <Slide>
              <SlideRail>
                <OverlapIcon />
                <RailLabel>LARAVEL API</RailLabel>
                <RailNumber>7</RailNumber>
              </SlideRail>
              <SlideBody>
                <Author>Created by Code With Dary</Author>
                <SeriesRow>
                  <Series>PROGRAMMING TUTORIALS</Series>
                  <SeriesLine />
                </SeriesRow>
                <SlideTitle>Status Range</SlideTitle>
                <SlideList>{statuses.map((s) => <div key={s}>{s}</div>)}</SlideList>
              </SlideBody>
            </Slide>
            <Controls>
              <Progress />
              <ControlRow>
                <PlaybackButtons>
                  {["prev", "play", "next"].map((k) => <Icon key={k} d={paths[k]} size={48} box={36} color="#e6e6e6" />)}
                  <Icon d={paths.volume} size={36} box={36} color="#e6e6e6" />
                </PlaybackButtons>
                <Time>4:44 / 9:41</Time>
                <Icon d={paths.captions} size={48} box={48} color="#e6e6e6" />
                <Icon d={paths.gear} size={48} box={36} color="#e6e6e6" />
                <Icon d={paths.miniplayer} size={48} box={48} color="#e6e6e6" />
                <Icon d={paths.theater} size={48} box={48} color="#e6e6e6" />
                <Icon d={paths.fullscreen} size={48} box={48} color="#e6e6e6" />
              </ControlRow>
            </Controls>
          </Player>

          <Below>
            <VideoInfo>
              <Tags>#laravel #laravel8 #laravelapi</Tags>
              <VideoTitle>HTTP Methods &amp; Service Responses | Laravel 8 API Course | Learn Laravel 8 API | Laravel 8 API</VideoTitle>
              <MetaRow>
                <Views>3,576 views • 10 Mar 2021</Views>
                {actions.map((a) => (
                  <Action key={a.icon} $label={a.label} $after={a.after}>
                    <Icon d={paths[a.icon]} color="#030303" />
                    <span>{a.text}</span>
                  </Action>
                ))}
                <MoreButton><Icon d={paths.more} color="#030303" /></MoreButton>
              </MetaRow>
            </VideoInfo>
            <Playlist>
              <PlaylistHead>
                <div>
                  <PlaylistTitle>Laravel 8 API Course</PlaylistTitle>
                  <PlaylistOwner>Code With Dary - 2/9</PlaylistOwner>
                </div>
                <Icon d={paths.collapse} color="#030303" />
              </PlaylistHead>
              <PlaylistTools>
                <Icon d={paths.repeat} color="#030303" />
                <Icon d={paths.shuffle} color="#030303" />
                <Icon d={paths.save} color="#030303" />
              </PlaylistTools>
            </Playlist>
          </Below>
        </Page>
        <Scrollbar />
      </Viewport>

      <Taskbar>
        <TaskButton><WindowsLogo /></TaskButton>
        <TaskSearch><Magnifier />Type here to search</TaskSearch>
        <TaskButton><svg width="16" height="16"><circle cx="8" cy="8" r="6.700" fill="none" stroke="#fff" strokeWidth="2" /></svg></TaskButton>
        <TaskButton><TaskView /></TaskButton>
        <AppList>
          {apps.map((a) => <AppItem key={a.name} $fill={a.fill} $line={a.line}>{a.icon}</AppItem>)}
        </AppList>
        <Tray>
          <Moon />
          <Temperature>25°C</Temperature>
          <svg width="12" height="8" fill="none" stroke="#fff" strokeWidth="1.200"><path d="M.5 6.500L6 1l5.500 5.500" /></svg>
          <TrayIcon $before={7}><PowerIcon /></TrayIcon>
          <TrayIcon><NetworkIcon /></TrayIcon>
          <TrayIcon><SpeakerIcon /></TrayIcon>
          <Language>ENG</Language>
          <Clock><div>18:35</div><div>25-12-2021</div></Clock>
          <Notifications><MessageIcon /><Badge>1</Badge></Notifications>
          <DesktopEdge />
        </Tray>
      </Taskbar>
    </Screen>
  );
}
